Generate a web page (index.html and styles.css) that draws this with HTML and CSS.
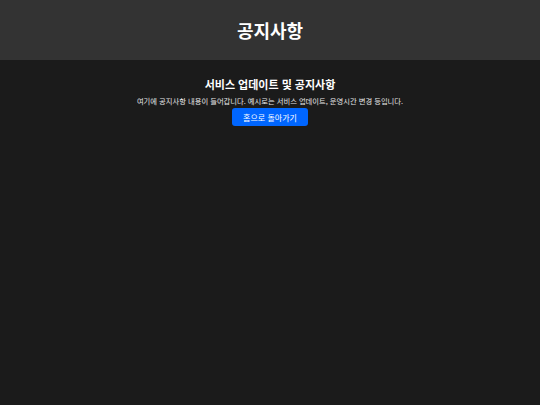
FILE: index.html
```html
<!DOCTYPE html>
<html lang="ko">
<head>
<meta charset="utf-8">
<title>공지사항</title>
<link rel="stylesheet" href="styles.css">
</head>
<body>
<header class="site-header">
  <h1 class="site-title">공지사항</h1>
</header>
<main class="notice">
  <h2 class="notice-title">서비스 업데이트 및 공지사항</h2>
  <p class="notice-text">여기에 공지사항 내용이 들어갑니다. 예시로는 서비스 업데이트, 운영시간 변경 등입니다.</p>
  <a class="home-btn" href="#">홈으로 돌아가기</a>
</main>
</body>
</html>
```

FILE: styles.css
```css
html, body {
  margin: 0;
  padding: 0;
  height: 100%;
}
body {
  background: #1b1b1b;
  color: #ffffff;
  font-family: "Noto Sans CJK KR", "Noto Sans", sans-serif;
}
.site-header {
  background: #333333;
  height: 60px;
  display: flex;
  align-items: center;
  justify-content: center;
}
.site-title {
  margin: 0;
  font-size: 18px;
  font-weight: 700;
  line-height: 1;
}
.notice {
  display: flex;
  flex-direction: column;
  align-items: center;
  padding-top: 17px;
}
.notice-title {
  margin: 0;
  font-size: 11px;
  font-weight: 700;
  line-height: 14px;
}
.notice-text {
  margin: 5px 0 0;
  font-size: 7.3px;
  line-height: 10px;
  color: #e6e6e6;
}
.home-btn {
  margin-top: 2px;
  display: inline-flex;
  align-items: center;
  justify-content: center;
  width: 76px;
  height: 18px;
  background: #0066ff;
  color: #ffffff;
  font-size: 8px;
  text-decoration: none;
  border-radius: 3px;
}
```
